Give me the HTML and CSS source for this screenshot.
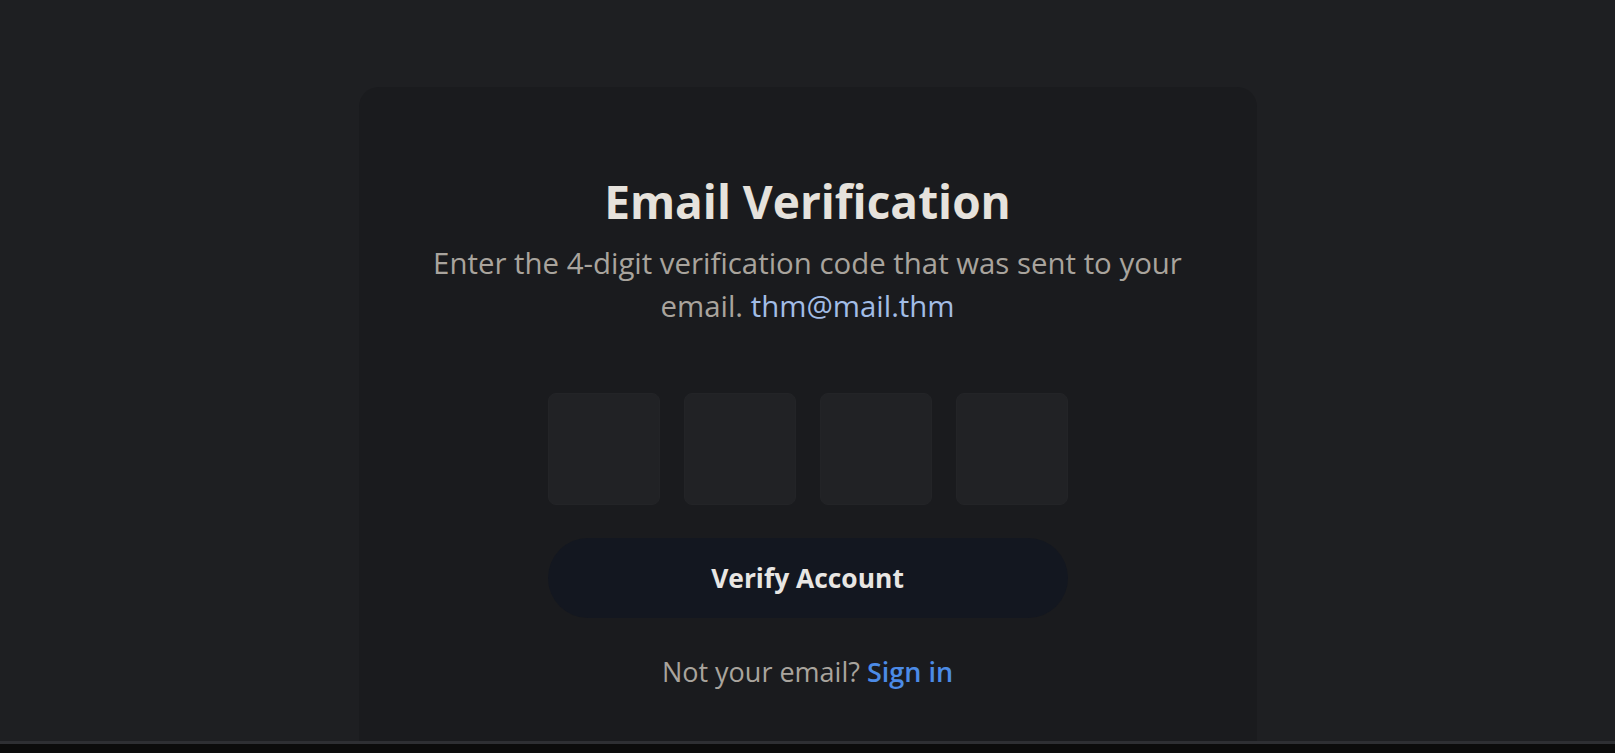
FILE: index.html
```html
<!DOCTYPE html>
<html lang="en">
<head>
<meta charset="utf-8">
<title>Email Verification</title>
<link rel="stylesheet" href="styles.css">
</head>
<body>
<div class="viewport">
  <main class="card">
    <h1 class="title">Email Verification</h1>
    <p class="subtitle"><span class="line">Enter the 4-digit verification code that was sent to your</span><br><span class="line">email. <span class="email">thm@mail.thm</span></span></p>
    <form class="form">
      <div class="codes">
        <input class="code" type="text" maxlength="1" inputmode="numeric" aria-label="Digit 1">
        <input class="code" type="text" maxlength="1" inputmode="numeric" aria-label="Digit 2">
        <input class="code" type="text" maxlength="1" inputmode="numeric" aria-label="Digit 3">
        <input class="code" type="text" maxlength="1" inputmode="numeric" aria-label="Digit 4">
      </div>
      <button class="verify" type="button">Verify Account</button>
    </form>
    <p class="alt">Not your email? <a class="signin" href="#">Sign in</a></p>
  </main>
</div>
<div class="strip"></div>
</body>
</html>
```
FILE: styles.css
```css
html, body {
  margin: 0;
  padding: 0;
  height: 100%;
}
body {
  background: #1e1f22;
  font-family: "Open Sans", "Lato", sans-serif;
  display: grid;
  grid-template-rows: 741px 12px;
  overflow: hidden;
}
.viewport {
  overflow: hidden;
  display: flex;
  justify-content: center;
  padding-top: 87px;
}
.card {
  width: 898px;
  height: 800px;
  background: #1a1b1e;
  border-radius: 20px;
  display: flex;
  flex-direction: column;
  align-items: center;
  padding-top: 87px;
  box-sizing: border-box;
}
.title {
  margin: 0;
  font-size: 46px;
  line-height: 54px;
  font-weight: 700;
  color: #e6e2dc;
}
.subtitle {
  margin: 14px 0 0;
  width: 800px;
  text-align: center;
  font-size: 29.4px;
  line-height: 43px;
  color: #a9a49d;
}
.email {
  color: #a2bde6;
}
.form {
  margin-top: 65px;
  display: flex;
  flex-direction: column;
  align-items: center;
}
.codes {
  display: flex;
  gap: 24px;
}
.code {
  width: 112px;
  height: 112px;
  box-sizing: border-box;
  background: #212225;
  border: 1px solid #232427;
  border-radius: 8px;
  outline: none;
  color: #e6e2dc;
  font: inherit;
  font-size: 40px;
  text-align: center;
}
.verify {
  margin-top: 33px;
  width: 520px;
  height: 80px;
  border: none;
  border-radius: 40px;
  background: #131720;
  color: #e8e6e3;
  font: inherit;
  font-size: 26.4px;
  font-weight: 700;
}
.alt {
  margin: 36px 0 0;
  font-size: 27px;
  line-height: 36px;
  color: #a9a49d;
}
.signin {
  color: #4c8be6;
  font-weight: 600;
  text-decoration: none;
}
.strip {
  border-top: 3px solid #2e2f33;
  background: #0c0c0c;
}
```
